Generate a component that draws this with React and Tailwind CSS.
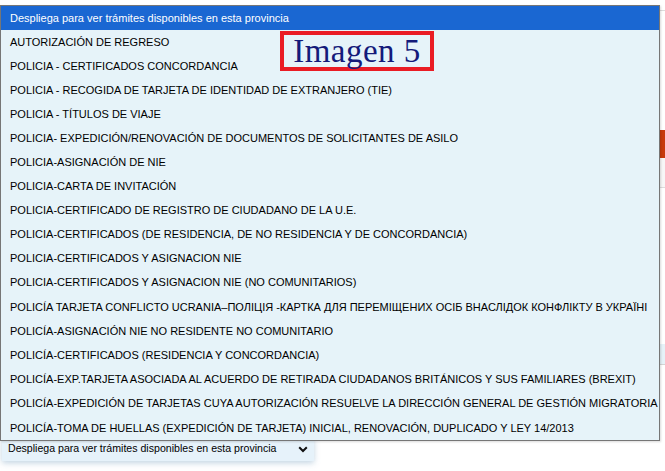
import React from "react";

const options = [
  "AUTORIZACIÓN DE REGRESO",
  "POLICIA - CERTIFICADOS CONCORDANCIA",
  "POLICIA - RECOGIDA DE TARJETA DE IDENTIDAD DE EXTRANJERO (TIE)",
  "POLICIA - TÍTULOS DE VIAJE",
  "POLICIA- EXPEDICIÓN/RENOVACIÓN DE DOCUMENTOS DE SOLICITANTES DE ASILO",
  "POLICIA-ASIGNACIÓN DE NIE",
  "POLICIA-CARTA DE INVITACIÓN",
  "POLICIA-CERTIFICADO DE REGISTRO DE CIUDADANO DE LA U.E.",
  "POLICIA-CERTIFICADOS (DE RESIDENCIA, DE NO RESIDENCIA Y DE CONCORDANCIA)",
  "POLICIA-CERTIFICADOS Y ASIGNACION NIE",
  "POLICIA-CERTIFICADOS Y ASIGNACION NIE (NO COMUNITARIOS)",
  "POLICÍA TARJETA CONFLICTO UCRANIA–ПОЛІЦІЯ -КАРТКА ДЛЯ ПЕРЕМІЩЕНИХ ОСІБ ВНАСЛІДОК КОНФЛІКТУ В УКРАЇНІ",
  "POLICÍA-ASIGNACIÓN NIE NO RESIDENTE NO COMUNITARIO",
  "POLICÍA-CERTIFICADOS (RESIDENCIA Y CONCORDANCIA)",
  "POLICÍA-EXP.TARJETA ASOCIADA AL ACUERDO DE RETIRADA CIUDADANOS BRITÁNICOS Y SUS FAMILIARES (BREXIT)",
  "POLICÍA-EXPEDICIÓN DE TARJETAS CUYA AUTORIZACIÓN RESUELVE LA DIRECCIÓN GENERAL DE GESTIÓN MIGRATORIA",
  "POLICÍA-TOMA DE HUELLAS (EXPEDICIÓN DE TARJETA) INICIAL, RENOVACIÓN, DUPLICADO Y LEY 14/2013",
];

export default function App() {
  return (
    <div className="relative w-[665px] h-[471px] overflow-hidden bg-white text-black font-['Liberation_Sans',Arial,sans-serif]">
      {/* background page */}
      <div className="flex flex-col">
        <div className="h-[10px]" />
        <div className="h-[120px] border-t border-[#dcdcdc]" />
        <div className="h-[28px] bg-[#c7390b]" />
        <div className="h-[30px] bg-[#f7f7f7] border-b border-[#dcdcdc]" />
        <div className="h-[156px]" />
        <div className="h-[21px] bg-[#e6f2f8] border-b border-[#d4d4d4]" />
        <div className="h-[72px]" />
        <div className="pl-[2px]">
          <div className="w-[312px] h-[24px] bg-[#e6f2fa] shadow-[0_2px_6px_rgba(120,160,190,0.45)] flex items-center justify-between pl-[6px] pr-[6px]">
            <span className="text-[10.6px] text-black whitespace-nowrap">
              Despliega para ver trámites disponibles en esta provincia
            </span>
            <svg width="10" height="7" viewBox="0 0 10 7">
              <path d="M1.2 1.2 L5 5 L8.8 1.2" fill="none" stroke="#111" strokeWidth="2" />
            </svg>
          </div>
        </div>
      </div>

      {/* open listbox */}
      <div className="absolute left-0 top-[5px] w-[660px] border border-[#767676] bg-[#e6f3f9] shadow-[1px_1px_2px_rgba(0,0,0,0.15)]">
        <div className="h-[24px] bg-[#1a67d2] text-white text-[11px] flex items-center pl-[9px] whitespace-nowrap">
          Despliega para ver trámites disponibles en esta provincia
        </div>
        {options.map((o, i) => (
          <div
            key={o}
            className={
              i >= 7
                ? "h-[24.2px] text-[11px] text-black flex items-center pl-[9px] whitespace-nowrap overflow-hidden"
                : "h-[24px] text-[11px] text-black flex items-center pl-[9px] whitespace-nowrap overflow-hidden"
            }
          >
            {o}
          </div>
        ))}
      </div>

      {/* Imagen 5 label */}
      <div className="absolute left-[280px] top-[31px] w-[154px] h-[40px] border-[4px] border-[#ea1c24] flex items-center justify-center">
        <span className="text-[33px] leading-none text-[#141a7a] whitespace-nowrap tracking-[0.5px] font-['Liberation_Serif',serif]">
          Imagen 5
        </span>
      </div>
    </div>
  );
}
